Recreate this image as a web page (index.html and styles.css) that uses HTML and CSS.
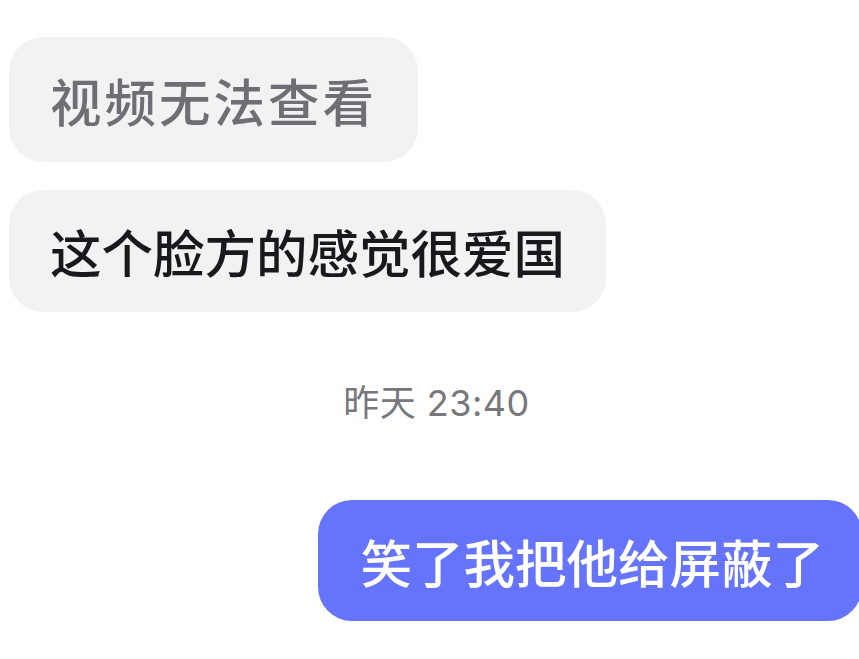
FILE: index.html
```html
<!DOCTYPE html>
<html lang="zh-CN">
<head>
    <meta charset="UTF-8">
    <meta name="viewport" content="width=device-width, initial-scale=1.0">
    <title>聊天</title>
    <link rel="stylesheet" href="styles.css">
</head>
<body>

    <div class="chat">
        <div class="row left">
            <div class="bubble gray muted">视频无法查看</div>
        </div>
        <div class="row left">
            <div class="bubble gray">这个脸方的感觉很爱国</div>
        </div>

        <div class="time">昨天 23:40</div>

        <div class="row right">
            <div class="bubble blue">笑了我把他给屏蔽了</div>
        </div>
    </div>

</body>
</html>
```

FILE: styles.css
```css
body {
    margin: 0;
    padding: 0;
    background-color: #ffffff;
    font-family: "Noto Sans CJK SC", "Noto Sans", sans-serif;
    overflow: hidden;
}
.chat {
    display: flex;
    flex-direction: column;
    padding-top: 37px;
}
.row {
    display: flex;
}
.row.left {
    padding-left: 9px;
    margin-bottom: 28px;
}
.row.right {
    justify-content: flex-end;
    margin-right: -3px;
}
.bubble {
    height: 122px;
    line-height: 122px;
    font-size: 51.5px;
    font-weight: 500;
    padding: 0 41px;
    border-radius: 34px;
    white-space: nowrap;
}
.bubble.gray {
    background-color: #f2f2f3;
    color: #18181d;
}
.bubble.muted {
    height: 125px;
    line-height: 125px;
    color: #6e6e74;
    letter-spacing: 3px;
    padding-right: 41px;
}
.bubble.blue {
    height: 121px;
    line-height: 121px;
    background-color: #6574fb;
    color: #ffffff;
    padding: 0 38px 0 42px;
}
.time {
    text-align: center;
    padding-left: 14px;
    font-family: "Inter", "Noto Sans CJK SC", sans-serif;
    font-size: 36px;
    letter-spacing: 0.5px;
    color: #77777c;
    height: 80px;
    line-height: 80px;
    margin-top: 23px;
    margin-bottom: 57px;
}
```
